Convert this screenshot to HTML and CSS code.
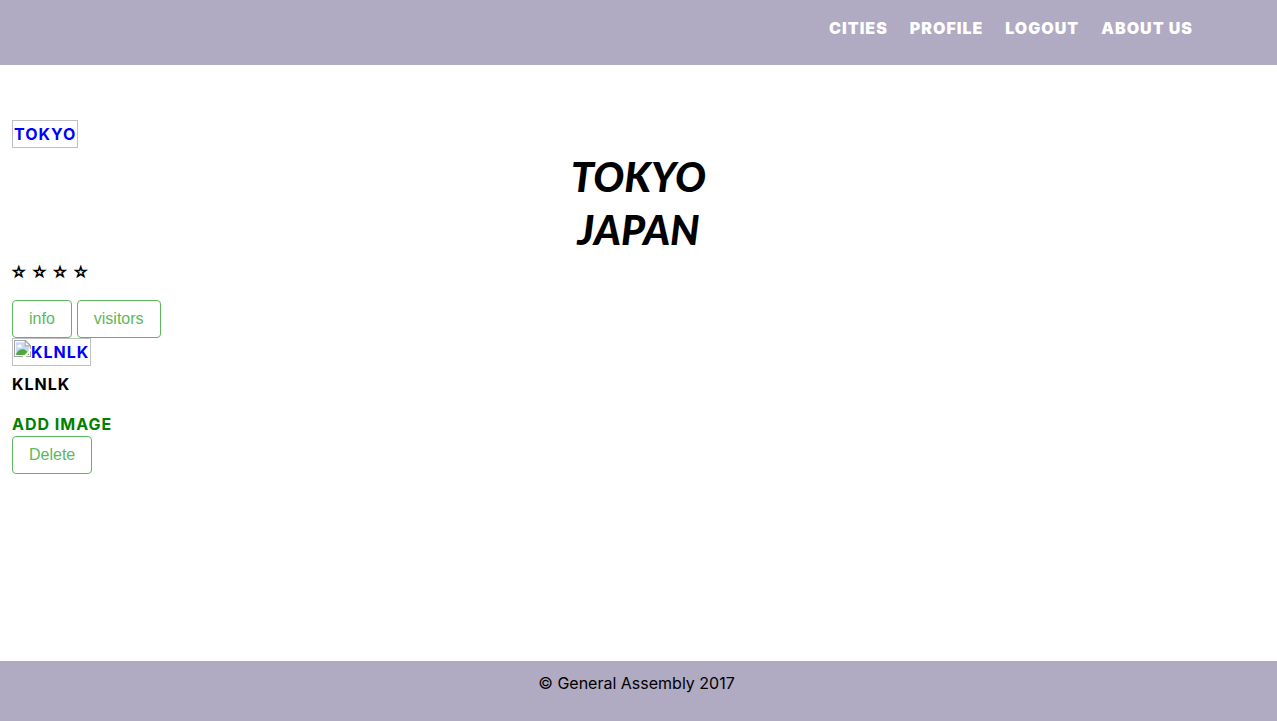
FILE: index.html
```html
<!DOCTYPE html>
<html lang="en">
<head>
<meta charset="utf-8">
<meta name="viewport" content="width=device-width, initial-scale=1">
<title>Tokyo</title>
<link rel="stylesheet" href="styles.css">
</head>
<body>
<header class="site-header">
  <nav class="site-nav">
    <a href="#cities">CITIES</a>
    <a href="#profile">PROFILE</a>
    <a href="#logout">LOGOUT</a>
    <a href="#about">ABOUT US</a>
  </nav>
</header>
<main class="city">
  <a class="image-link" href="#tokyo">TOKYO</a>
  <h1 class="city-title">TOKYO<br>JAPAN</h1>
  <p class="stars">☆ ☆ ☆ ☆</p>
  <div class="actions">
    <button class="btn" type="button">info</button>
    <button class="btn" type="button">visitors</button>
  </div>
  <a class="image-link" href="#klnlk">
    <svg class="broken-icon" viewBox="0 0 16 16" aria-hidden="true">
      <path d="M.5.5h10l5 5v10H.5z" fill="#fff" stroke="#a3a3a3"/>
      <path d="M2 2h8v4h4v8H2z" fill="#c5d9f7"/>
      <path d="M3 7c0-2 1-2 2-3 2 0 2 1 2 2 1 0 1 1 0 1z" fill="#fff"/>
      <path d="M2 14v-1c2-4 5-5 8-4l4 3v2z" fill="#50a83c"/>
      <path d="M10.500.5v5h5z" fill="#fff" stroke="#a3a3a3"/>
      <path d="M8 16l8-8v2l-5 6z" fill="#fff"/>
    </svg>KLNLK</a>
  <p class="image-name">KLNLK</p>
  <a class="add-link" href="#add">ADD IMAGE</a>
  <button class="btn" type="button">Delete</button>
</main>
<footer class="site-footer">© General Assembly 2017</footer>
</body>
</html>
```
FILE: styles.css
```css
* {
  box-sizing: border-box;
}

body {
  display: flex;
  flex-direction: column;
  min-height: 100vh;
  margin: 0;
  background: #fff;
  color: #000;
  font: 16px/24px Inter, "Noto Sans", sans-serif;
}

a {
  text-decoration: none;
}

.site-header {
  padding: 16px 84px 25px 16px;
  background: #b0aac2;
}

.site-nav {
  display: flex;
  justify-content: flex-end;
  gap: 22px;
  font-weight: 900;
  letter-spacing: 1px;
}

.site-nav a {
  color: #fff;
}

.city {
  display: flex;
  flex: 1;
  flex-direction: column;
  align-items: flex-start;
  padding: 55px 12px 24px;
  font-weight: 700;
}

.image-link {
  display: flex;
  align-items: center;
  height: 28px;
  padding: 0 1px;
  border: 1px solid #c0c0c0;
  color: #00f;
  letter-spacing: 1px;
}

.broken-icon {
  width: 17px;
  height: 17px;
  margin-bottom: 7px;
}

.city-title {
  align-self: center;
  margin: 2px 0 4px;
  font: italic 900 41px/53px Lato, cursive;
  text-align: center;
}

.stars {
  margin: 0 0 16px;
  font-family: "DejaVu Sans", sans-serif;
  font-size: 15px;
  letter-spacing: 1px;
  -webkit-text-stroke: 1px #000;
}

.actions {
  display: flex;
  gap: 5px;
}

.btn {
  height: 38px;
  padding: 0 16px;
  border: 1px solid #5cb85c;
  border-radius: 4px;
  background: #fff;
  color: #5cb85c;
  font: 16px/24px "Liberation Sans", Arial, sans-serif;
}

.image-name {
  margin: 6px 0 16px;
  letter-spacing: 1px;
}

.add-link {
  color: #008000;
  letter-spacing: 1px;
}

.site-footer {
  min-height: 60px;
  padding: 10px 12px 26px 8px;
  background: #b0aac2;
  text-align: center;
}
```
